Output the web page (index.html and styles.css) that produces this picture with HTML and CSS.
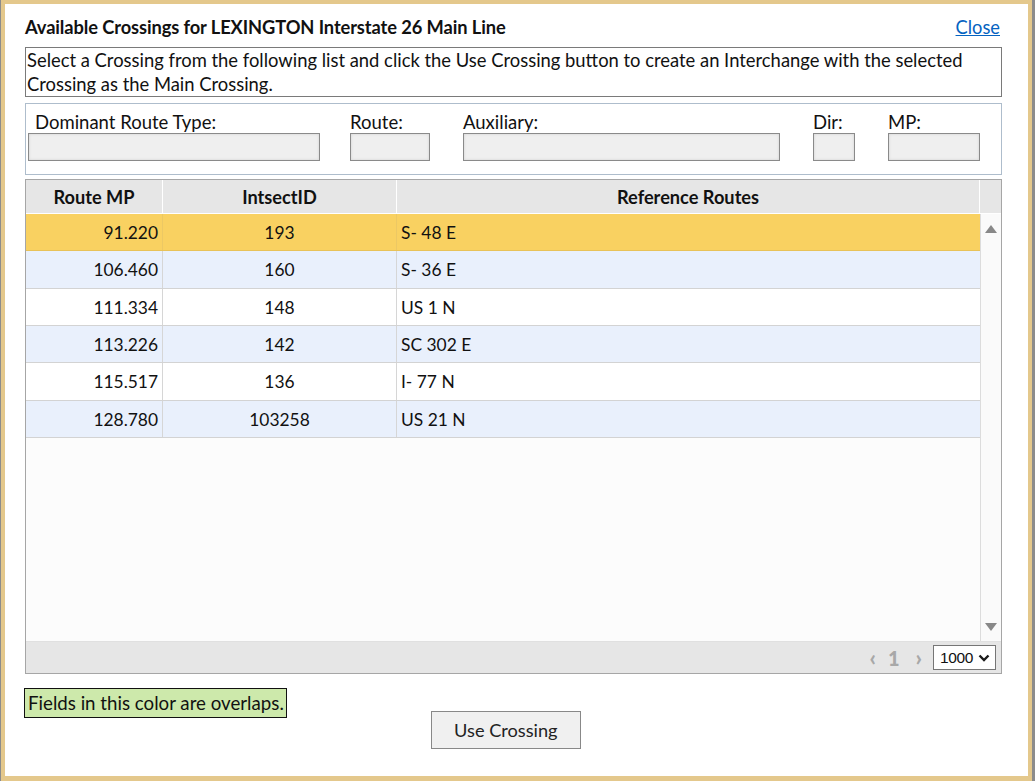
FILE: index.html
```html
<!DOCTYPE html>
<html>
<head>
<meta charset="utf-8">
<title>Available Crossings</title>
<link rel="stylesheet" href="styles.css">
</head>
<body>
<div class="window">
  <div class="dialog">
    <div class="titlebar">
      <span class="title">Available Crossings for LEXINGTON Interstate 26 Main Line</span>
      <a class="close" href="#">Close</a>
    </div>
    <div class="desc">Select a Crossing from the following list and click the Use Crossing button to create an Interchange with the selected Crossing as the Main Crossing.</div>
    <div class="filters">
      <div class="field f-type"><label>Dominant Route Type:</label><div class="box"></div></div>
      <div class="field f-route"><label>Route:</label><div class="box"></div></div>
      <div class="field f-aux"><label>Auxiliary:</label><div class="box"></div></div>
      <div class="field f-dir"><label>Dir:</label><div class="box"></div></div>
      <div class="field f-mp"><label>MP:</label><div class="box"></div></div>
    </div>
    <div class="grid">
      <div class="grid-head">
        <div class="hc c1">Route MP</div>
        <div class="hc c2">IntsectID</div>
        <div class="hc c3">Reference Routes</div>
        <div class="hc cs"></div>
      </div>
      <div class="grid-main">
        <div class="rows">
          <div class="row selected"><div class="cell c1 num">91.220</div><div class="cell c2 mid">193</div><div class="cell c3">S- 48 E</div></div>
          <div class="row alt"><div class="cell c1 num">106.460</div><div class="cell c2 mid">160</div><div class="cell c3">S- 36 E</div></div>
          <div class="row"><div class="cell c1 num">111.334</div><div class="cell c2 mid">148</div><div class="cell c3">US 1 N</div></div>
          <div class="row alt"><div class="cell c1 num">113.226</div><div class="cell c2 mid">142</div><div class="cell c3">SC 302 E</div></div>
          <div class="row"><div class="cell c1 num">115.517</div><div class="cell c2 mid">136</div><div class="cell c3">I- 77 N</div></div>
          <div class="row alt"><div class="cell c1 num">128.780</div><div class="cell c2 mid">103258</div><div class="cell c3">US 21 N</div></div>
        </div>
        <div class="scroll">
          <span class="arrow up"></span>
          <span class="arrow down"></span>
        </div>
      </div>
      <div class="pager">
        <span class="pg pg-prev">&#x2039;</span>
        <span class="pg pg-num">1</span>
        <span class="pg pg-next">&#x203A;</span>
        <div class="select"><span>1000</span><svg class="chev" width="12" height="8" viewBox="0 0 12 8"><path d="M1.5 1.5 L6 6 L10.5 1.5" fill="none" stroke="#1a1a1a" stroke-width="2.4"/></svg></div>
      </div>
    </div>
    <div class="footer">
      <div class="legend">Fields in this color are overlaps.</div>
      <button class="use">Use Crossing</button>
    </div>
  </div>
</div>
</body>
</html>
```
FILE: styles.css
```css
html, body {
  margin: 0;
  padding: 0;
}
body {
  font-family: Lato, "Open Sans", sans-serif;
  color: #111;
  background: #8a8a8a;
}
.window {
  width: 1035px;
  height: 781px;
  box-sizing: border-box;
  border-left: 1px solid #8c8c8c;
  border-right: 3px solid #8c8c8c;
  background: #e4c88c;
  padding: 4px 4px 5px 4px;
}
.dialog {
  background: #fff;
  height: 772px;
  box-sizing: border-box;
  padding: 12px 26px 0 20px;
}
.titlebar {
  display: flex;
  justify-content: space-between;
  align-items: baseline;
  height: 31px;
}
.title {
  font-weight: 700;
  font-size: 18.3px;
  letter-spacing: -0.1px;
}
.close {
  color: #0563c1;
  font-size: 18.3px;
  text-decoration: underline;
  margin-right: 2px;
}
.desc {
  border: 1px solid #7a7a7a;
  height: 48px;
  padding: 0 0 0 1px;
  font-size: 18.4px;
  line-height: 24px;
  margin-bottom: 6px;
}
.filters {
  border: 1px solid #aebdcc;
  display: flex;
  margin-bottom: 4px;
  padding: 7px 0 0 2px;
  box-sizing: border-box;
  height: 72px;
}
.field {
  display: flex;
  flex-direction: column;
}
.field label {
  font-size: 18.5px;
  height: 22px;
  line-height: 22px;
}
.box {
  height: 26px;
  border: 1px solid #8a8a8a;
  background: #efefef;
  box-shadow: inset 0 0 3px rgba(0,0,0,0.12);
}
.f-type { width: 292px; }
.f-type label { padding-left: 7px; }
.f-route { width: 80px; margin-left: 30px; }
.f-aux { width: 317px; margin-left: 33px; }
.f-dir { width: 42px; margin-left: 33px; }
.f-mp { width: 92px; margin-left: 33px; }

.grid {
  border: 1px solid #a6a6a6;
  height: 495px;
  box-sizing: border-box;
  display: flex;
  flex-direction: column;
}
.grid-head {
  display: flex;
  height: 34px;
  background: #e6e6e6;
  border-bottom: 1px solid #fff;
  box-sizing: border-box;
}
.hc {
  font-weight: 700;
  font-size: 18.2px;
  display: flex;
  align-items: center;
  justify-content: center;
  border-right: 1px solid #fff;
  box-sizing: border-box;
}
.c1 { width: 137px; }
.c2 { width: 234px; }
.c3 { width: 583px; }
.hc.cs { flex: 1; border-right: none; }

.grid-main {
  flex: 1;
  display: flex;
  background: #fcfcfc;
}
.rows {
  width: 954px;
  border-right: 1px solid #dcdcdc;
}
.row {
  display: flex;
  height: 37.33px;
  box-sizing: border-box;
  border-bottom: 1px solid #d3d3d3;
  background: #fff;
  font-size: 17.4px;
}
.row.alt { background: #e9f0fc; }
.row.selected { background: #f9d161; border-bottom-color: #e8c258; }
.cell {
  display: flex;
  align-items: center;
  box-sizing: border-box;
  border-right: 1px solid #d6d6d6;
  padding: 1px 4px 0 4px;
}
.cell.c3 { border-right: none; }
.row.selected .cell { border-right-color: #ecc864; }
.num { justify-content: flex-end; }
.mid { justify-content: center; }
.scroll {
  flex: 1;
  position: relative;
  background: #fafafa;
}
.arrow {
  position: absolute;
  left: 4px;
  width: 0;
  height: 0;
  border-left: 6px solid transparent;
  border-right: 6px solid transparent;
}
.arrow.up { top: 11px; border-bottom: 8px solid #888; }
.arrow.down { bottom: 10px; border-top: 8px solid #888; }

.pager {
  height: 32px;
  background: #e6e6e6;
  border-top: 1px solid #e0e0e0;
  box-sizing: border-box;
  display: flex;
  align-items: center;
  justify-content: flex-end;
  padding-right: 5px;
}
.pg {
  color: #a8a8a8;
  font-weight: 900;
  font-size: 20px;
}
.pg-prev { margin-right: 12px; font-size: 22px; }
.pg-num { margin-right: 16px; }
.pg-next { margin-right: 11px; font-size: 22px; }
.select {
  width: 63px;
  height: 25px;
  box-sizing: border-box;
  border: 1px solid #767676;
  background: #fff;
  font-family: "Liberation Sans", Arial, sans-serif;
  font-size: 15.5px;
  letter-spacing: -0.4px;
  color: #111;
  display: flex;
  align-items: center;
  padding-left: 6px;
  gap: 5px;
}
.footer {
  display: flex;
  align-items: flex-start;
  margin-top: 14px;
  margin-left: -1px;
}
.legend {
  background: #cde9ab;
  border: 1px solid #111;
  font-size: 18.7px;
  height: 30px;
  box-sizing: border-box;
  line-height: 28px;
  padding: 0 2px 0 3px;
}
.use {
  margin-left: 144px;
  margin-top: 23px;
  width: 150px;
  height: 38px;
  background: #f0f0f0;
  border: 1px solid #888;
  font-family: Lato, "Open Sans", sans-serif;
  font-size: 18.2px;
  color: #222;
  padding: 0;
}
```
